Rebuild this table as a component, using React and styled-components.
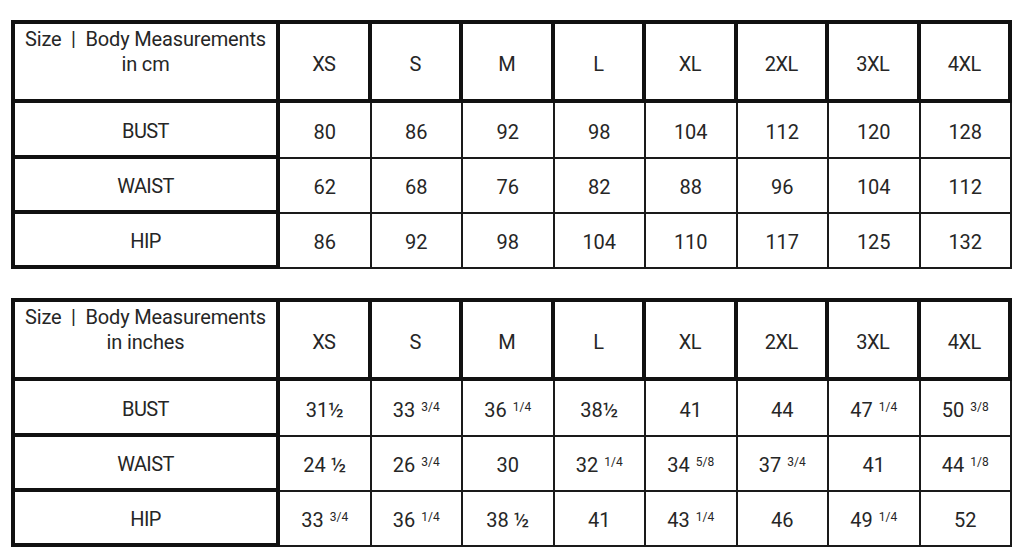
import React from "react";
import styled, { createGlobalStyle } from "styled-components";

const Global = createGlobalStyle`
  html, body { margin: 0; padding: 0; background: #ffffff; }
  body { font-family: Roboto, "Liberation Sans", Arial, sans-serif; color: #262626; }
`;

const Page = styled.div`
  display: flex;
  flex-direction: column;
  gap: 29px;
  padding: 20px 0 0 11px;
`;

const Table = styled.table`
  border-collapse: separate;
  border-spacing: 0;
  table-layout: fixed;
  width: 1001px;
  font-size: 20px;
  font-weight: 400;
  line-height: 24.5px;
`;

const HeadRow = styled.tr`
  height: 83px;
`;

const BodyRow = styled.tr`
  height: ${(p) => p.$h}px;
`;

const Corner = styled.th`
  font-weight: 400;
  text-align: center;
  vertical-align: top;
  padding: 3px 4px 0;
  border: 4px solid #111;
  letter-spacing: -0.15px;
`;

const SizeHead = styled.th`
  font-weight: 400;
  text-align: center;
  vertical-align: middle;
  padding: 5px 0 0;
  border-top: 4px solid #111;
  border-bottom: 4px solid #111;
  border-right: 4px solid #111;
  letter-spacing: -0.6px;
`;

const Label = styled.th`
  font-weight: 400;
  text-align: center;
  vertical-align: middle;
  padding: 4px 0 0;
  border-left: 4px solid #111;
  border-right: 4px solid #111;
  border-bottom: 4px solid #111;
  letter-spacing: -0.6px;
`;

const Cell = styled.td`
  text-align: center;
  vertical-align: middle;
  padding: 4px 0 0;
  border-right: 2px solid #1a1a1a;
  border-bottom: 2px solid #1a1a1a;
  white-space: nowrap;
`;

const Frac = styled.span`
  font-size: 12px;
  vertical-align: 6px;
  line-height: 0;
  margin-left: 1px;
`;

const sizes = ["XS", "S", "M", "L", "XL", "2XL", "3XL", "4XL"];

const cm = [
  ["BUST", ["80", "86", "92", "98", "104", "112", "120", "128"]],
  ["WAIST", ["62", "68", "76", "82", "88", "96", "104", "112"]],
  ["HIP", ["86", "92", "98", "104", "110", "117", "125", "132"]],
];

const inches = [
  ["BUST", ["31½", "33 ^3/4", "36 ^1/4", "38½", "41", "44", "47 ^1/4", "50 ^3/8"]],
  ["WAIST", ["24 ½", "26 ^3/4", "30", "32 ^1/4", "34 ^5/8", "37 ^3/4", "41", "44 ^1/8"]],
  ["HIP", ["33 ^3/4", "36 ^1/4", "38 ½", "41", "43 ^1/4", "46", "49 ^1/4", "52"]],
];

const rowHeights = [56, 55, 55];

function Value({ v }) {
  const [whole, frac] = v.split("^");
  return (
    <>
      {whole}
      {frac && <Frac>{frac}</Frac>}
    </>
  );
}

function SizeTable({ unit, rows }) {
  return (
    <Table>
      <colgroup>
        <col style={{ width: 269 }} />
        {sizes.map((s) => (
          <col key={s} style={{ width: 91.5 }} />
        ))}
      </colgroup>
      <thead>
        <HeadRow>
          <Corner>
            Size&nbsp; |&nbsp; Body Measurements
            <br />
            in {unit}
          </Corner>
          {sizes.map((s) => (
            <SizeHead key={s}>{s}</SizeHead>
          ))}
        </HeadRow>
      </thead>
      <tbody>
        {rows.map(([label, vals], i) => (
          <BodyRow key={label} $h={rowHeights[i]}>
            <Label>{label}</Label>
            {vals.map((v, j) => (
              <Cell key={j}>
                <Value v={v} />
              </Cell>
            ))}
          </BodyRow>
        ))}
      </tbody>
    </Table>
  );
}

export default function App() {
  return (
    <>
      <Global />
      <Page>
        <SizeTable unit="cm" rows={cm} />
        <SizeTable unit="inches" rows={inches} />
      </Page>
    </>
  );
}
